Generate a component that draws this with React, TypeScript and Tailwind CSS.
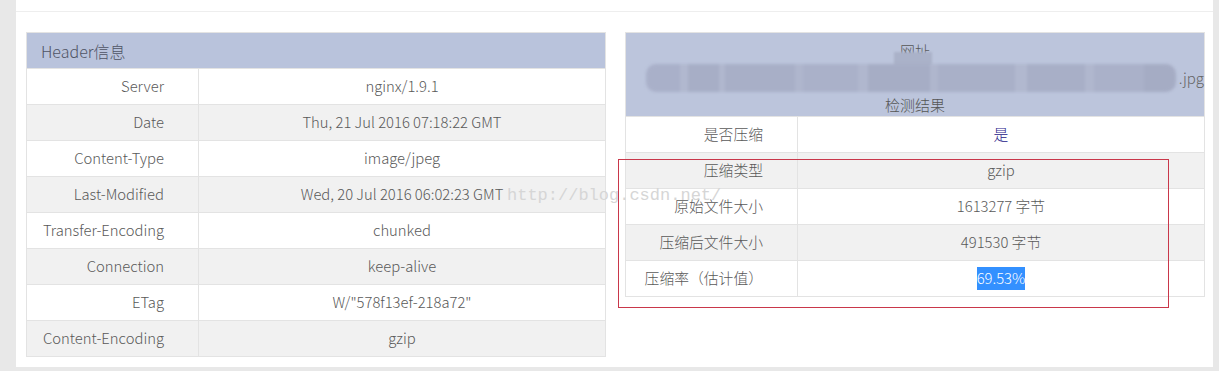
const headerRows: [string, string][] = [
  ["Server", "nginx/1.9.1"],
  ["Date", "Thu, 21 Jul 2016 07:18:22 GMT"],
  ["Content-Type", "image/jpeg"],
  ["Last-Modified", "Wed, 20 Jul 2016 06:02:23 GMT"],
  ["Transfer-Encoding", "chunked"],
  ["Connection", "keep-alive"],
  ["ETag", 'W/"578f13ef-218a72"'],
  ["Content-Encoding", "gzip"],
];

const resultRows: { label: string; value: React.ReactNode }[] = [
  { label: "是否压缩", value: <span className="text-[#1d2088]">是</span> },
  { label: "压缩类型", value: "gzip" },
  { label: "原始文件大小", value: "1613277 字节" },
  { label: "压缩后文件大小", value: "491530 字节" },
  {
    label: "压缩率（估计值）",
    value: <span className="bg-[#3390ff] text-white">69.53%</span>,
  },
];

// mosaic blocks standing in for the blurred url
const blur = [
  { w: 34, c: "#a9b0c9" },
  { w: 8, c: "#b1b8cf" },
  { w: 32, c: "#a7aec6" },
  { w: 6, c: "#b0b7ce" },
  { w: 70, c: "#a8afc7" },
  { w: 8, c: "#afb6cd" },
  { w: 56, c: "#aab1c9" },
  { w: 10, c: "#b0b7ce" },
  { w: 62, c: "#a6adc5" },
  { w: 8, c: "#afb6cd" },
  { w: 78, c: "#a9b0c8" },
  { w: 12, c: "#b1b8cf" },
  { w: 58, c: "#a8afc7" },
  { w: 10, c: "#b0b7ce" },
  { w: 50, c: "#aab1c9" },
  { w: 32, c: "#a5acc4" },
];

function Row({
  label,
  value,
  odd,
}: {
  label: string;
  value: React.ReactNode;
  odd: boolean;
}) {
  return (
    <div
      className={`flex h-9 border-t border-[#e3e3e3] ${odd ? "bg-[#f1f1f1]" : "bg-white"}`}
    >
      <div className="w-[172px] shrink-0 border-r border-[#e3e3e3] pr-[34px] flex items-center justify-end">
        {label}
      </div>
      <div className="flex-1 flex items-center justify-center">{value}</div>
    </div>
  );
}

export default function App() {
  return (
    <div
      className="w-[1219px] h-[371px] bg-[#e8e8e8] pl-4 pr-[6px] text-[14.8px] font-light text-[#595959]"
      style={{ fontFamily: '"Noto Sans CJK SC", "Noto Sans", sans-serif' }}
    >
      <div className="relative bg-white h-[367px]">
        <div className="h-3 border-b border-[#eeeeee]" />

        <div className="flex gap-[19px] pl-[10px] pt-5">
          {/* Header info table */}
          <div className="w-[580px] border border-[#e3e3e3]">
            <div className="h-[35px] bg-[#b9c3dc] flex items-center pl-[14px] text-[16px] text-[#4f5464]">
              Header信息
            </div>
            {headerRows.map(([k, v], i) => (
              <Row key={k} label={k} value={v} odd={i % 2 === 1} />
            ))}
          </div>

          {/* Result table */}
          <div className="w-[580px] self-start border border-[#e3e3e3]">
            <div className="h-[83px] bg-[#bcc5dc] flex flex-col items-center pt-[5px] text-[15px] text-[#555] leading-[26px]">
              <div className="relative">
                网址
                <span className="absolute left-[-6px] top-[14px] w-[38px] h-[14px] bg-[#aab2c9] blur-[1px]" />
              </div>
              <div className="flex items-center w-full pl-[20px] h-[28px]">
                <div className="flex h-[28px] items-stretch rounded-[10px] overflow-hidden blur-[1.5px]">
                  {blur.map((b, i) => (
                    <span
                      key={i}
                      className="block"
                      style={{ width: b.w, backgroundColor: b.c }}
                    />
                  ))}
                </div>
                <span className="pl-[3px] text-[#666]">.jpg</span>
              </div>
              <div>检测结果</div>
            </div>
            {resultRows.map((r, i) => (
              <Row key={r.label} label={r.label} value={r.value} odd={i % 2 === 1} />
            ))}
          </div>
        </div>

        {/* watermark */}
        <div
          className="absolute left-[491px] top-[183px] text-[17px] text-[#d6d6d6]"
          style={{ fontFamily: '"Liberation Mono", monospace' }}
        >
          http://blog.csdn.net/
        </div>

        {/* red annotation box */}
        <div className="absolute left-[602px] top-[159px] w-[551px] h-[149px] border border-[#c9374a]" />
      </div>
    </div>
  );
}
